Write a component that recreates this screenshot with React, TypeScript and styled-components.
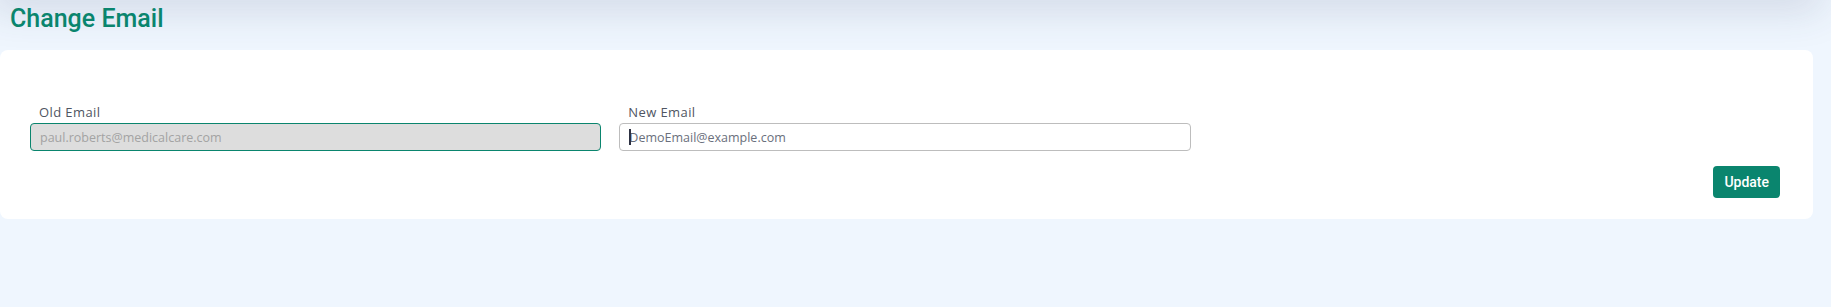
import styled, { createGlobalStyle } from 'styled-components';

const GlobalStyle = createGlobalStyle`
  html, body {
    margin: 0;
    padding: 0;
    background: #eff6fe;
  }
  * {
    box-sizing: border-box;
  }
`;

const Page = styled.div`
  padding-right: 18px;
  min-height: 307px;
`;

const HeaderShadow = styled.div`
  height: 20px;
  margin-top: -20px;
  box-shadow: 0 0 40px 10px rgba(50, 60, 100, 0.16);
`;

const Title = styled.h2`
  margin: 4px 0 16px 10px;
  font-family: Roboto, 'Liberation Sans', sans-serif;
  font-weight: 500;
  font-size: 25px;
  line-height: 30px;
  color: #0a856e;
`;

const Card = styled.div`
  background: #ffffff;
  border-radius: 8px;
  padding: 53px 33px 21px 30px;
`;

const FieldGrid = styled.div`
  display: grid;
  grid-template-columns: repeat(3, 1fr);
  column-gap: 18px;
`;

const Field = styled.div`
  display: flex;
  flex-direction: column;
`;

const Label = styled.label`
  font-family: 'Open Sans', sans-serif;
  font-size: 13px;
  letter-spacing: 0.4px;
  line-height: 18px;
  color: #4f5562;
  padding-left: 9px;
  margin-bottom: 2px;
`;

const InputWrap = styled.div`
  position: relative;
`;

const Input = styled.input<{ $locked?: boolean }>`
  width: 100%;
  height: 28px;
  padding: 0 9px;
  border-radius: 4px;
  font-family: 'Open Sans', sans-serif;
  font-size: 12.5px;
  outline: none;
  border: 1px solid ${p => (p.$locked ? '#0a856e' : '#bdbdbd')};
  background: ${p => (p.$locked ? '#dddddd' : '#ffffff')};
  color: ${p => (p.$locked ? '#a3a3a3' : '#6a6f7c')};
`;

const Caret = styled.span`
  position: absolute;
  left: 10px;
  top: 6px;
  width: 1.5px;
  height: 16px;
  background: #2d3142;
`;

const Actions = styled.div`
  display: flex;
  justify-content: flex-end;
  margin-top: 15px;
`;

const Button = styled.button`
  height: 32px;
  padding: 0 11px;
  border: none;
  border-radius: 4px;
  background: #0a856e;
  color: #ffffff;
  font-family: Roboto, 'Liberation Sans', sans-serif;
  font-weight: 500;
  font-size: 14px;
  cursor: pointer;
`;

export default function App(): JSX.Element {
  return (
    <Page>
      <GlobalStyle />
      <HeaderShadow />
      <Title>Change Email</Title>
      <Card>
        <FieldGrid>
          <Field>
            <Label>Old Email</Label>
            <Input $locked readOnly value="paul.roberts@medicalcare.com" />
          </Field>
          <Field>
            <Label>New Email</Label>
            <InputWrap>
              <Input defaultValue="DemoEmail@example.com" />
              <Caret />
            </InputWrap>
          </Field>
        </FieldGrid>
        <Actions>
          <Button type="button">Update</Button>
        </Actions>
      </Card>
    </Page>
  );
}
